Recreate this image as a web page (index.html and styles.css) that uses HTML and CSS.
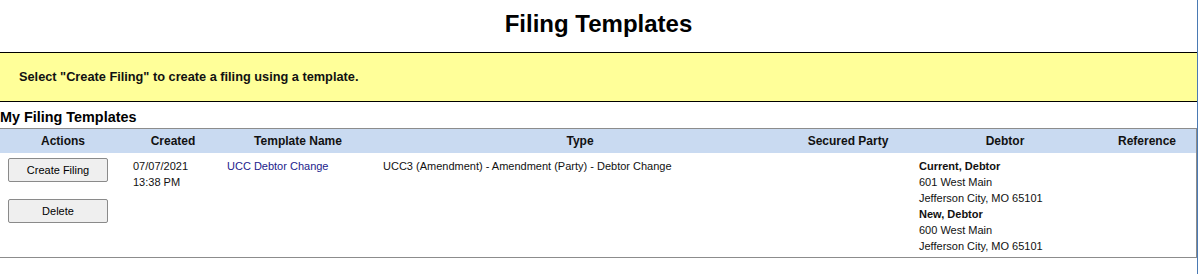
FILE: index.html
```html
<!DOCTYPE html>
<html lang="en">
<head>
  <meta charset="UTF-8">
  <meta name="viewport" content="width=device-width, initial-scale=1.0">
  <title>Filing Templates</title>
  <link rel="stylesheet" href="styles.css">
</head>
<body>
  <div class="page">
    <h1 class="title">Filing Templates</h1>
    <div class="notice">Select "Create Filing" to create a filing using a template.</div>
    <h2 class="section-title">My Filing Templates</h2>
    <div class="grid-wrap">
      <table class="grid">
        <colgroup>
          <col class="col-actions">
          <col class="col-created">
          <col class="col-name">
          <col class="col-type">
          <col class="col-party">
          <col class="col-debtor">
          <col class="col-ref">
        </colgroup>
        <thead>
          <tr>
            <th>Actions</th>
            <th>Created</th>
            <th>Template Name</th>
            <th>Type</th>
            <th>Secured Party</th>
            <th>Debtor</th>
            <th>Reference</th>
          </tr>
        </thead>
        <tbody>
          <tr>
            <td class="actions">
              <button type="button" class="btn">Create Filing</button>
              <button type="button" class="btn">Delete</button>
            </td>
            <td>07/07/2021<br>13:38 PM</td>
            <td><a href="#" class="name-link">UCC Debtor Change</a></td>
            <td>UCC3 (Amendment) - Amendment (Party) - Debtor Change</td>
            <td></td>
            <td>
              <b>Current, Debtor</b><br>
              601 West Main<br>
              Jefferson City, MO 65101<br>
              <b>New, Debtor</b><br>
              600 West Main<br>
              Jefferson City, MO 65101
            </td>
            <td></td>
          </tr>
        </tbody>
      </table>
    </div>
  </div>
</body>
</html>
```

FILE: styles.css
```css
body {
  font-family: "Liberation Sans", Arial, sans-serif;
  background-color: #ffffff;
  color: #000000;
  margin: 0;
  padding: 0;
}
.page {
  width: 1197px;
  min-height: 274px;
  border-right: 1px solid #4a7ab4;
}
.title {
  font-size: 24px;
  font-weight: bold;
  line-height: 28px;
  text-align: center;
  margin: 0;
  padding: 10px 0 14px 0;
}
.notice {
  background-color: #ffff99;
  border-top: 1px solid #000000;
  border-bottom: 1px solid #000000;
  font-size: 12.75px;
  font-weight: bold;
  line-height: 48px;
  padding-left: 19px;
  color: #111111;
}
.section-title {
  font-size: 14.4px;
  font-weight: bold;
  line-height: 18px;
  margin: 6px 0 2px 0;
}
.grid-wrap {
  width: 1196px;
  border-top: 1px solid #8c8c8c;
  border-right: 1px solid #8c8c8c;
  border-bottom: 1px solid #8c8c8c;
}
.grid {
  width: 100%;
  border-collapse: collapse;
  table-layout: fixed;
}
.col-actions { width: 126px; }
.col-created { width: 94px; }
.col-name { width: 156px; }
.col-type { width: 408px; }
.col-party { width: 128px; }
.col-debtor { width: 186px; }
.col-ref { width: 98px; }
th {
  background-color: #c9daf1;
  font-size: 12px;
  font-weight: bold;
  line-height: 24px;
  height: 24px;
  padding: 0;
  text-align: center;
  color: #111111;
}
td {
  font-size: 11px;
  line-height: 16px;
  vertical-align: top;
  text-align: left;
  padding: 5px 7px 3px 7px;
  color: #111111;
}
td.actions {
  padding-left: 8px;
}
.btn {
  display: block;
  width: 100px;
  height: 24px;
  margin-bottom: 17px;
  font-family: "Liberation Sans", Arial, sans-serif;
  font-size: 11px;
  color: #000000;
  background-color: #efefef;
  border: 1px solid #8a8a8a;
  border-radius: 2px;
  padding: 0;
}
.btn:last-child {
  margin-bottom: 0;
}
.name-link {
  color: #1c1c8c;
  text-decoration: none;
}
```
